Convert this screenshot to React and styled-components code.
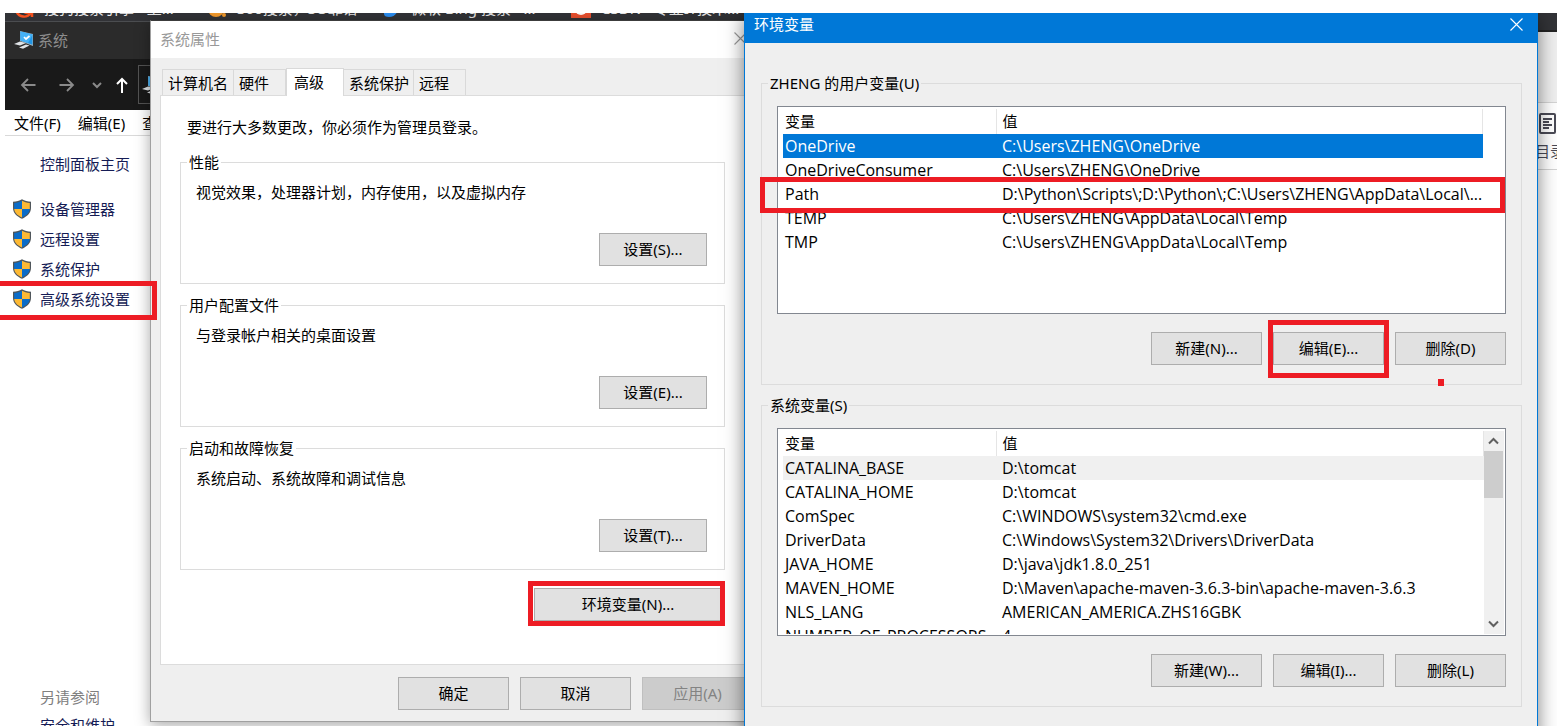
import React from "react";
import styled, { createGlobalStyle, css } from "styled-components";

const GlobalStyle = createGlobalStyle`
    * {
        box-sizing: border-box;
    }

    body {
        margin: 0;
        background: #fff;
        color: #000;
        font: 15px/24px "Noto Sans", "Noto Sans CJK SC", sans-serif;
    }

    button {
        font: inherit;
        color: inherit;
        padding: 0;
    }

    a {
        color: inherit;
        text-decoration: none;
    }
`

const Desktop = styled.main`
    position: relative;
    overflow: hidden;
    height: calc(100vh - 13px);
    margin-top: 13px;
`

/* ---------- browser in the back ---------- */

const Browser = styled.section`
    display: flex;
    flex-direction: column;
    height: 100%;
    margin-left: 5px;

    .strip {
        display: flex;
        align-items: flex-end;
        height: 19px;
        padding: 0 0 12px 9px;
        background: #323337;
        border-bottom: 2px solid #242424;
        color: #e8e8e8;
        line-height: 20px;
        overflow: hidden;
    }

    .toolbar {
        height: 71px;
        background: #efefef;
        border-bottom: 1px solid #d4d4d4;
    }

    .reader {
        display: flex;
        flex-direction: column;
        align-items: flex-end;
        gap: 4px;
        height: 67px;
        padding: 10px 0 0;
        border-bottom: 1px solid #d4d4d4;
        color: #4a4a55;
        overflow: hidden;
    }

    .reader span {
        margin-right: -8px;
    }
`

const BrowserTab = styled.div`
    display: flex;
    align-items: flex-end;
    flex: none;
    gap: 10px;
    width: ${props => props.width}px;
    white-space: nowrap;

    svg {
        flex: none;
    }
`

/* ---------- shared window parts ---------- */

const Window = styled.section`
    position: absolute;
    display: flex;
    flex-direction: column;
`

const Button = styled.button`
    width: ${props => props.width || 111}px;
    height: 33px;
    padding-bottom: 2px;
    border: 1px solid #adadad;
    background: #e1e1e1;
    line-height: 24px;

    &:disabled {
        background: #ccc;
        border-color: #bfbfbf;
        color: #838383;
    }
`

const CloseButton = styled.button`
    display: flex;
    border: 0;
    background: none;
`

const ButtonRow = styled.div`
    display: flex;
    justify-content: flex-end;
    gap: 11px;
`

const Group = styled.fieldset`
    min-width: 0;
    margin: 0;
    border: 1px solid #dcdcdc;

    legend {
        margin-left: -9px;
        padding: 0 2px;
        line-height: 20px;
    }
`

const mark = css`
    content: "";
    position: absolute;
    border: 5px solid #ed1c24;
    pointer-events: none;
    z-index: 2;
`

/* ---------- control panel window ---------- */

const SystemWindow = styled(Window)`
    top: 8px;
    left: 5px;
    right: 600px;
    bottom: 0;
    background: #fff;
    border-top: 1px solid #4b4d50;

    .title {
        display: flex;
        align-items: center;
        gap: 4px;
        height: 37px;
        padding: 0 0 2px 9px;
        background: #2b2b2b;
        color: #8d8d8d;
    }

    .nav {
        display: flex;
        align-items: center;
        height: 51px;
        padding-left: 3px;
        background: #191919;
    }

    .address {
        display: flex;
        align-items: center;
        flex: 1;
        height: 39px;
        margin-left: 2px;
        padding-left: 3px;
        border: 1px solid #535353;
    }

    .menu {
        display: flex;
        gap: 17px;
        height: 26px;
        padding: 1px 0 0 9px;
        border-bottom: 1px solid #d9d9d9;
    }

    .side {
        display: flex;
        flex-direction: column;
        flex: 1;
        padding: 13px 0 0 7px;
        color: #151c55;
    }

    .more {
        height: 41px;
        margin-top: auto;
        padding-left: 28px;
        overflow: hidden;
    }

    .more p {
        margin: 0 0 4px;
        color: #808080;
    }
`

const NavButton = styled.button`
    display: flex;
    justify-content: center;
    width: ${props => props.width}px;
    border: 0;
    background: none;
    color: ${props => props.$active ? '#fff' : '#8a8a8a'};
`

const SideLink = styled.a`
    display: flex;
    align-items: center;
    gap: 8px;
    height: 30px;
    padding-left: ${props => props.$plain ? 28 : 0}px;
    margin-bottom: ${props => props.$plain ? 15 : 0}px;
`

const SideMark = styled.span`
    ${mark}
    top: 268px;
    left: -5px;
    width: 162px;
    height: 39px;
`

/* ---------- system properties ---------- */

const PropertiesWindow = styled(Window)`
    top: 7px;
    left: 150px;
    width: 613px;
    border: 1px solid #a0a0a0;
    border-top-color: #3c3c3c;
    background: #efefef;
    box-shadow: 0 3px 14px rgba(0, 0, 0, 0.35);

    .title {
        display: flex;
        align-items: center;
        justify-content: space-between;
        height: 37px;
        padding: 0 15px 2px 9px;
        background: #fff;
        color: #999;
    }

    .tabs {
        display: flex;
        align-items: flex-end;
        height: 37px;
        padding-left: 11px;
    }

    .panel {
        display: flex;
        flex-direction: column;
        gap: 11px;
        height: 570px;
        margin: 0 9px;
        padding: 19px 27px 0 19px;
        background: #fff;
        border: 1px solid #dcdcdc;
    }

    .panel > p {
        margin: 0 0 2px;
        padding-left: 7px;
    }

    .panel > ${ButtonRow} {
        margin: 7px 3px 0 0;
    }

    .footer {
        padding: 12px 9px 11px;
    }
`

const Tab = styled.button`
    width: ${props => props.width}px;
    height: 26px;
    border: 1px solid #d9d9d9;
    border-bottom: 0;
    border-left-width: ${props => props.$first ? 1 : 0}px;
    background: #efefef;
    text-align: left;
    padding-left: 5px;
    white-space: nowrap;

    &[aria-selected="true"] {
        height: 28px;
        margin-bottom: -1px;
        padding: 0 0 2px 7px;
        border-left-width: 1px;
        background: #fff;
        z-index: 1;
    }
`

const PropertyGroup = styled(Group)`
    display: flex;
    flex-direction: column;
    gap: 29px;
    padding: 8px 17px 17px 15px;

    p {
        margin: 0;
    }

    ${Button} {
        align-self: flex-end;
    }
`

const EnvironmentButton = styled(Button)`
    position: relative;

    &::after {
        ${mark}
        inset: -8px -4px -6px -7px;
    }
`

/* ---------- environment variables ---------- */

const EnvironmentWindow = styled(Window)`
    top: 0;
    left: 744px;
    right: 19px;
    bottom: -20px;
    border: 1px solid #0078d7;
    border-top: 0;
    background: #efefef;
    box-shadow: 0 3px 18px rgba(0, 0, 0, 0.5);

    .title {
        display: flex;
        align-items: center;
        justify-content: space-between;
        height: 30px;
        padding: 0 14px 8px 9px;
        background: #0078d7;
        color: #fff;
    }

    .content {
        display: flex;
        flex-direction: column;
        gap: 10px;
        padding: 30px 15px 0 16px;
    }
`

const VariableGroup = styled(Group)`
    position: relative;
    padding: 13px 15px 19px 15px;
`

const ListBox = styled.div`
    display: flex;
    height: 208px;
    margin-bottom: 18px;
    padding: 2px 1px 1px 5px;
    border: 1px solid #828790;
    background: #fff;

    .view {
        flex: 1;
        overflow-x: visible;
        overflow-y: clip;
        margin-right: ${props => props.$scroll ? 0 : 21}px;
    }
`

const VariableTable = styled.table`
    width: 100%;
    table-layout: fixed;
    border-collapse: collapse;

    th, td {
        height: 24px;
        padding: 0 0 0 2px;
        text-align: left;
        font-weight: normal;
        line-height: 24px;
        white-space: nowrap;
    }

    td {
        font-family: "Open Sans", "Noto Sans CJK SC", sans-serif;
        font-size: 16px;
    }

    th {
        height: 25px;
        padding-bottom: 1px;
        border-right: 1px solid #e5e5e5;
    }

    th:first-child {
        width: 213px;
    }

    th + th, td + td {
        padding-left: 6px;
    }
`

const Row = styled.tr`
    background: ${props => props.$selected ? '#0078d7' : props.$hot ? '#f0f0f0' : 'none'};
    color: ${props => props.$selected ? '#fff' : '#000'};
`

const RowMark = styled.span`
    ${mark}
    top: 84px;
    left: -2px;
    right: 16px;
    height: 36px;
`

const Scrollbar = styled.div`
    display: flex;
    flex-direction: column;
    width: 20px;
    background: #f0f0f0;

    button {
        display: flex;
        align-items: center;
        justify-content: center;
        width: 19px;
        height: 20px;
        border: 0;
        background: none;
    }

    .thumb {
        width: 19px;
        height: 47px;
        margin-bottom: auto;
        background: #cdcdcd;
    }
`

const EditButton = styled(Button)`
    ${props => props.$marked && css`
        position: relative;

        &::after {
            ${mark}
            inset: -13px -6px -14px -6px;
        }
    `}
`

const RedDot = styled.span`
    position: absolute;
    right: 77px;
    bottom: -2px;
    width: 6px;
    height: 7px;
    background: #ed1c24;
`

/* ---------- icons ---------- */

const Cross = () => (
    <svg width="13" height="13" viewBox="0 0 13 13" fill="none" stroke="currentColor" strokeWidth="1.1">
        <path d="M.5.5l12 12M12.5.5l-12 12" />
    </svg>
)

const Chevron = ({ up }) => (
    <svg width="11" height="8" viewBox="0 0 11 8" fill="none" stroke="#606060" strokeWidth="2">
        <path d={up ? 'M1 6.5L5.5 2 10 6.5' : 'M1 1.5L5.5 6 10 1.5'} />
    </svg>
)

const Computer = () => (
    <svg width="20" height="18" viewBox="0 0 20 18">
        <path d="M6 0l13 3v12L6 10z" fill="#9fb4c0" />
        <path d="M6.5.5l12 3v10.300L6.500 9.500z" fill="#2196e6" />
        <path d="M6.5.5l12 3L14 12 6.500 9.500z" fill="#45b2f7" />
        <path d="M10 6l2 2 3.500-3" stroke="#fff" strokeWidth="1.700" fill="none" />
        <path d="M0 13l6-2.500 6 1.500-6 2.500zM5 16.500l7-3 3.500 1-6.500 3.200z" fill="#dfe3e6" />
    </svg>
)

const Shield = () => (
    <svg width="20" height="20" viewBox="0 0 20 20">
        <path d="M10 .3c2.500 1.500 5.500 2.300 9 2.500v6.200c0 5-4 8.500-9 10.800C5 17.500 1 14 1 9V2.800C4.500 2.600 7.500 1.800 10 .3z" fill="#4f565b" />
        <path d="M10 1.800V10H2.200V4C5.500 3.800 7.800 3.100 10 1.800z" fill="#0b6cc8" />
        <path d="M10 1.800V10h7.800V4C14.500 3.800 12.200 3.100 10 1.800z" fill="#fdb933" />
        <path d="M10 18.400V10H2.200c.4 3.800 3.300 6.500 7.800 8.400z" fill="#fdb933" />
        <path d="M10 18.400V10h7.800c-.4 3.800-3.300 6.500-7.800 8.400z" fill="#0b6cc8" />
    </svg>
)

const NavIcon = ({ d, width = 16, height = 16, stroke = 1.8 }) => (
    <svg width={width} height={height} viewBox={`0 0 ${width} ${height}`} fill="none" stroke="currentColor" strokeWidth={stroke}>
        <path d={d} />
    </svg>
)

/* ---------- data ---------- */

const browserTabs = [
    {
        title: '搜狗搜索引擎 - 上...', width: 193,
        icon: <path d="M2 9c1 9 13 10 15 3M6 7c2 6 8 7 12 5v5" stroke="#f4511e" strokeWidth="2.500" fill="none" />,
    },
    {
        title: '360搜索，SO靠谱', width: 174,
        icon: <><circle cx="9" cy="9" r="8" fill="#f39a2d" /><circle cx="17" cy="15" r="2" fill="#f39a2d" /></>,
    },
    {
        title: '微软 Bing 搜索 - ...', width: 190,
        icon: <path d="M3 2l5 2v7l8-4c2 5-2 10-8 10-3 0-5-1-5-3z" fill="#2b8df0" />,
    },
    {
        title: 'CSDN - 专业IT技术...', width: 190,
        icon: <><path d="M0 0h20v18H0z" fill="#e8502f" /><circle cx="10" cy="9" r="6" fill="#fff" /></>,
    },
]

const settings = [
    { name: '性能', text: '视觉效果，处理器计划，内存使用，以及虚拟内存', button: '设置(S)...' },
    { name: '用户配置文件', text: '与登录帐户相关的桌面设置', button: '设置(E)...' },
    { name: '启动和故障恢复', text: '系统启动、系统故障和调试信息', button: '设置(T)...' },
]

const userVariables = [
    { name: 'OneDrive', value: 'C:\\Users\\ZHENG\\OneDrive', selected: true },
    { name: 'OneDriveConsumer', value: 'C:\\Users\\ZHENG\\OneDrive' },
    { name: 'Path', value: 'D:\\Python\\Scripts\\;D:\\Python\\;C:\\Users\\ZHENG\\AppData\\Local\\...' },
    { name: 'TEMP', value: 'C:\\Users\\ZHENG\\AppData\\Local\\Temp' },
    { name: 'TMP', value: 'C:\\Users\\ZHENG\\AppData\\Local\\Temp' },
]

const systemVariables = [
    { name: 'CATALINA_BASE', value: 'D:\\tomcat', hot: true },
    { name: 'CATALINA_HOME', value: 'D:\\tomcat' },
    { name: 'ComSpec', value: 'C:\\WINDOWS\\system32\\cmd.exe' },
    { name: 'DriverData', value: 'C:\\Windows\\System32\\Drivers\\DriverData' },
    { name: 'JAVA_HOME', value: 'D:\\java\\jdk1.8.0_251' },
    { name: 'MAVEN_HOME', value: 'D:\\Maven\\apache-maven-3.6.3-bin\\apache-maven-3.6.3' },
    { name: 'NLS_LANG', value: 'AMERICAN_AMERICA.ZHS16GBK' },
    { name: 'NUMBER_OF_PROCESSORS', value: '4' },
]

const Variables = ({ title, rows, scroll, buttons, marked }) => (
    <VariableGroup>
        <legend>{title}</legend>
        <ListBox $scroll={scroll}>
            <div className="view">
                <VariableTable>
                    <thead>
                        <tr><th>变量</th><th>值</th></tr>
                    </thead>
                    <tbody>
                        {rows.map(row => (
                            <Row key={row.name} $selected={row.selected} $hot={row.hot}>
                                <td>{row.name}</td>
                                <td>{row.value}</td>
                            </Row>
                        ))}
                    </tbody>
                </VariableTable>
            </div>
            {scroll &&
                <Scrollbar>
                    <button aria-label="向上"><Chevron up /></button>
                    <div className="thumb" />
                    <button aria-label="向下"><Chevron /></button>
                </Scrollbar>
            }
        </ListBox>
        {marked && <RowMark />}
        <ButtonRow>
            <Button>{buttons[0]}</Button>
            <EditButton $marked={marked}>{buttons[1]}</EditButton>
            <Button>{buttons[2]}</Button>
        </ButtonRow>
        {marked && <RedDot />}
    </VariableGroup>
)

export default function App() {
    return (
        <>
            <GlobalStyle />
            <Desktop>
                <Browser>
                    <div className="strip">
                        {browserTabs.map(tab => (
                            <BrowserTab key={tab.title} width={tab.width}>
                                <svg width="20" height="18" viewBox="0 0 20 18">{tab.icon}</svg>
                                {tab.title}
                            </BrowserTab>
                        ))}
                    </div>
                    <div className="toolbar" />
                    <div className="reader">
                        <svg width="18" height="22" viewBox="0 0 18 22" fill="none" stroke="currentColor" strokeWidth="2">
                            <rect x="1" y="1" width="15" height="19" rx="1" />
                            <path d="M4 6h9M4 9h6M4 12h9M4 15h6" />
                        </svg>
                        <span>目录</span>
                    </div>
                </Browser>

                <SystemWindow>
                    <div className="title"><Computer />系统</div>
                    <div className="nav">
                        <NavButton width={40} aria-label="后退"><NavIcon d="M15.5 8H2M8 2L2 8l6 6" /></NavButton>
                        <NavButton width={38} aria-label="前进"><NavIcon d="M.5 8H14M8 2l6 6-6 6" /></NavButton>
                        <NavButton width={22} aria-label="历史"><NavIcon d="M1 2l4 4 4-4" width={10} height={8} stroke={2} /></NavButton>
                        <NavButton width={28} aria-label="上移" $active><NavIcon d="M6 16V2M1 7l5-5 5 5" width={12} stroke={2} /></NavButton>
                        <div className="address"><Computer /></div>
                    </div>
                    <div className="menu">
                        <span>文件(F)</span>
                        <span>编辑(E)</span>
                        <span>查看(V)</span>
                    </div>
                    <div className="side">
                        <SideLink href="#" $plain>控制面板主页</SideLink>
                        <SideLink href="#"><Shield />设备管理器</SideLink>
                        <SideLink href="#"><Shield />远程设置</SideLink>
                        <SideLink href="#"><Shield />系统保护</SideLink>
                        <SideLink href="#"><Shield />高级系统设置</SideLink>
                        <div className="more">
                            <p>另请参阅</p>
                            <a href="#">安全和维护</a>
                        </div>
                    </div>
                </SystemWindow>

                <PropertiesWindow>
                    <div className="title">
                        系统属性
                        <CloseButton aria-label="关闭"><Cross /></CloseButton>
                    </div>
                    <div className="tabs" role="tablist">
                        <Tab role="tab" width={72} $first>计算机名</Tab>
                        <Tab role="tab" width={52}>硬件</Tab>
                        <Tab role="tab" width={58} aria-selected="true">高级</Tab>
                        <Tab role="tab" width={70}>系统保护</Tab>
                        <Tab role="tab" width={52}>远程</Tab>
                    </div>
                    <div className="panel">
                        <p>要进行大多数更改，你必须作为管理员登录。</p>
                        {settings.map(item => (
                            <PropertyGroup key={item.name}>
                                <legend>{item.name}</legend>
                                <p>{item.text}</p>
                                <Button width={108}>{item.button}</Button>
                            </PropertyGroup>
                        ))}
                        <ButtonRow>
                            <EnvironmentButton width={188}>环境变量(N)...</EnvironmentButton>
                        </ButtonRow>
                    </div>
                    <ButtonRow className="footer">
                        <Button>确定</Button>
                        <Button>取消</Button>
                        <Button disabled>应用(A)</Button>
                    </ButtonRow>
                </PropertiesWindow>
                <SideMark />

                <EnvironmentWindow>
                    <div className="title">
                        环境变量
                        <CloseButton aria-label="关闭"><Cross /></CloseButton>
                    </div>
                    <div className="content">
                        <Variables title="ZHENG 的用户变量(U)" rows={userVariables} buttons={['新建(N)...', '编辑(E)...', '删除(D)']} marked />
                        <Variables title="系统变量(S)" rows={systemVariables} buttons={['新建(W)...', '编辑(I)...', '删除(L)']} scroll />
                    </div>
                </EnvironmentWindow>
            </Desktop>
        </>
    )
}
